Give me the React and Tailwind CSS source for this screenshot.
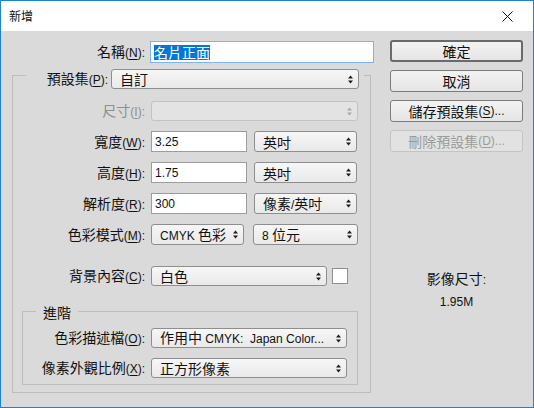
import React from 'react';

const CJK = /([\u2e80-\u9fff\uf900-\ufaff\uff00-\uffef]+)/;
const LATIN = "font-['Liberation_Sans',sans-serif] text-[12px]";

// Chinese runs stay in the CJK face, the rest drops to the smaller Latin face
function T({ s }) {
  return s
    .split(CJK)
    .filter(Boolean)
    .map((part, i) =>
      CJK.test(part) ? (
        <span key={i}>{part}</span>
      ) : (
        <span key={i} className={LATIN}>
          {part}
        </span>
      )
    );
}

function Label({ text, k, className = '' }) {
  return (
    <div className={`text-right whitespace-nowrap leading-[20px] ${className}`}>
      <T s={text} />
      <span className={LATIN}>
        (<span className="underline underline-offset-2">{k}</span>):
      </span>
    </div>
  );
}

function Arrows({ disabled }) {
  const c = disabled ? '#a9a9a9' : '#1a1a1a';
  return (
    <svg width="5" height="9" viewBox="0 0 5 9" className="shrink-0">
      <path d="M2.5 0.5 L5 3.5 L0 3.5 Z" fill={c} />
      <path d="M0 5.5 L5 5.5 L2.5 8.5 Z" fill={c} />
    </svg>
  );
}

function Select({ value, className = '', disabled }) {
  return (
    <div
      className={`flex items-center justify-between rounded-[3px] border pl-[8px] pr-[5px] ${
        disabled
          ? 'border-[#c3c3c3] bg-[#e3e3e3]'
          : 'border-[#8e8e8e] bg-gradient-to-b from-[#f7f7f7] to-[#e9e9e9]'
      } ${className}`}
    >
      <span className="whitespace-pre leading-[18px]">{value && <T s={value} />}</span>
      <Arrows disabled={disabled} />
    </div>
  );
}

function Field({ value, className = '' }) {
  return (
    <div className={`flex items-center bg-white border border-[#9d9d9d] pl-[3px] ${className}`}>
      <T s={value} />
    </div>
  );
}

function Button({ children, primary, disabled }) {
  return (
    <button
      type="button"
      className={`h-[22px] w-full flex items-center justify-center rounded-[3px] leading-[20px] ${
        primary
          ? 'border-2 border-[#6a6a6a] bg-gradient-to-b from-[#f3f3f3] to-[#e5e5e5]'
          : disabled
          ? 'border border-[#c4c4c4] bg-[#e2e2e2] text-[#9b9b9b]'
          : 'border border-[#7c7c7c] bg-gradient-to-b from-[#f3f3f3] to-[#e5e5e5]'
      }`}
    >
      {children}
    </button>
  );
}

export default function App() {
  return (
    <div className="w-[534px] h-[408px] border border-[#1a83d6] bg-[#dadada] flex flex-col text-[14px] text-[#111] font-['Noto_Sans_CJK_TC','Liberation_Sans',sans-serif]">
      {/* title bar */}
      <div className="h-[30px] bg-white flex items-center justify-between pl-[8px] pr-[20px]">
        <span className="text-[12px] leading-none">新增</span>
        <svg width="11" height="11" viewBox="0 0 11 11">
          <path d="M0.5 0.5 L10.5 10.5 M10.5 0.5 L0.5 10.5" stroke="#111" strokeWidth="1" />
        </svg>
      </div>

      <div className="flex flex-1">
        {/* form side */}
        <div className="w-[380px] flex flex-col">
          <div className="mt-[10px] flex items-center h-[22px]">
            <Label text="名稱" k="N" className="w-[144px]" />
            <div className="ml-[5px] w-[224px] h-[22px] bg-white border border-[#7eb4ea] flex items-center pl-[3px]">
              <span className="bg-[#0078d7] text-white leading-[15px]">名片正面</span>
            </div>
          </div>

          <div className="mt-[12px] ml-[11px] w-[359px] h-[318px] border border-[#bdbdbd] flex flex-col">
            <div className="-mt-[7px] ml-[13px] w-[338px] h-[20px] flex items-center bg-[#dadada]">
              <Label text="預設集" k="P" className="w-[82px]" />
              <Select value="自訂" className="ml-[3px] w-[248px] h-[20px]" />
            </div>

            <div className="mt-[12px] flex items-center h-[20px]">
              <Label text="尺寸" k="I" className="w-[132px] text-[#8f8f8f]" />
              <Select disabled className="ml-[6px] w-[207px] h-[20px]" />
            </div>

            <div className="mt-[10px] flex items-center h-[21px]">
              <Label text="寬度" k="W" className="w-[132px]" />
              <Field value="3.25" className="ml-[6px] w-[96px] h-[21px]" />
              <Select value="英吋" className="ml-[7px] w-[103px] h-[21px]" />
            </div>

            <div className="mt-[10px] flex items-center h-[21px]">
              <Label text="高度" k="H" className="w-[132px]" />
              <Field value="1.75" className="ml-[6px] w-[96px] h-[21px]" />
              <Select value="英吋" className="ml-[7px] w-[103px] h-[21px]" />
            </div>

            <div className="mt-[10px] flex items-center h-[21px]">
              <Label text="解析度" k="R" className="w-[132px]" />
              <Field value="300" className="ml-[6px] w-[96px] h-[21px]" />
              <Select value="像素/英吋" className="ml-[7px] w-[103px] h-[21px]" />
            </div>

            <div className="mt-[10px] flex items-center h-[21px]">
              <Label text="色彩模式" k="M" className="w-[132px]" />
              <Select value="CMYK 色彩" className="ml-[6px] w-[93px] h-[21px]" />
              <Select value="8 位元" className="ml-[9px] w-[105px] h-[21px]" />
            </div>

            <div className="mt-[21px] flex items-center h-[20px]">
              <Label text="背景內容" k="C" className="w-[132px]" />
              <Select value="白色" className="ml-[6px] w-[176px] h-[20px]" />
              <div className="ml-[5px] w-[16px] h-[16px] bg-white border border-[#8e8e8e]" />
            </div>

            {/* advanced group */}
            <div className="mt-[25px] ml-[9px] w-[336px] h-[74px] border border-[#bdbdbd] flex flex-col">
              <div className="-mt-[10px] ml-[13px] self-start px-[7px] h-[20px] leading-[20px] bg-[#dadada]">進階</div>
              <div className="mt-[6px] flex items-center h-[20px]">
                <Label text="色彩描述檔" k="O" className="w-[122px]" />
                <Select value="作用中 CMYK:  Japan Color..." className="ml-[6px] w-[196px] h-[20px]" />
              </div>
              <div className="mt-[10px] flex items-center h-[20px]">
                <Label text="像素外觀比例" k="X" className="w-[122px]" />
                <Select value="正方形像素" className="ml-[6px] w-[196px] h-[20px]" />
              </div>
            </div>
          </div>
        </div>

        {/* buttons side */}
        <div className="ml-[9px] w-[133px] flex flex-col pt-[9px]">
          <div className="flex flex-col gap-[8px]">
            <Button primary>確定</Button>
            <Button>取消</Button>
            <Button>
              <T s="儲存預設集" />
              <span className={LATIN}>
                (<span className="underline underline-offset-2">S</span>)...
              </span>
            </Button>
            <Button disabled>
              <T s="刪除預設集" />
              <span className={LATIN}>
                (<span className="underline underline-offset-2">D</span>)...
              </span>
            </Button>
          </div>
          <div className="mt-[116px] text-center leading-[20px]">
            <T s="影像尺寸:" />
          </div>
          <div className={`mt-[2px] text-center leading-[20px] ${LATIN}`}>1.95M</div>
        </div>
      </div>
    </div>
  );
}
